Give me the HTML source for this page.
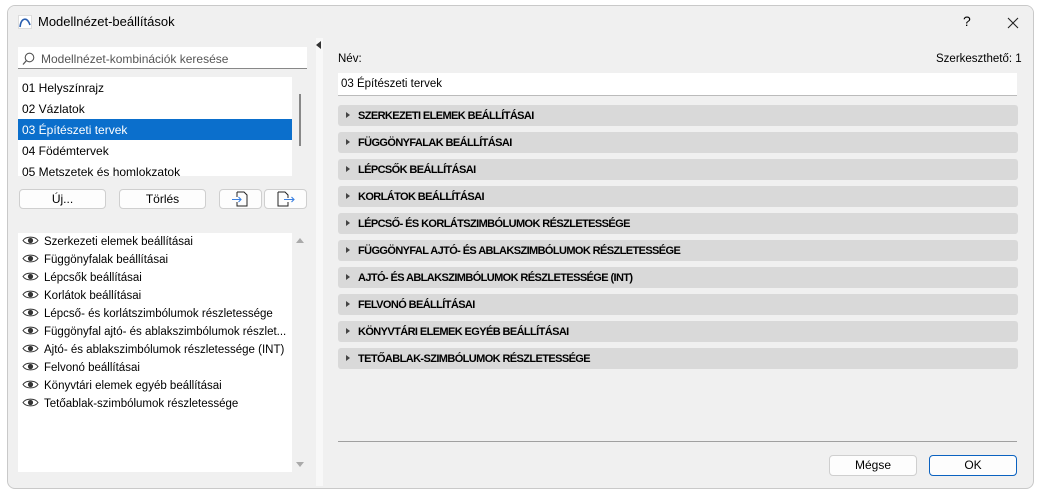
<!DOCTYPE html>
<html><head><meta charset="utf-8"><style>
*{box-sizing:border-box;margin:0;padding:0}
body{width:1041px;height:498px;background:#fff;font-family:"Segoe UI","Liberation Sans",sans-serif;font-size:12px;color:#000;position:relative;overflow:hidden}
.abs{position:absolute}
#win{left:7px;top:5px;width:1027px;height:484px;background:#f0f0f0;border:1px solid #c9c9c9;border-radius:8px;overflow:hidden}
#title{left:0;top:0;width:1027px;height:33px;background:#f0f0f0}
.t{position:absolute;white-space:nowrap}
.box{position:absolute;background:#fff}
.row{position:absolute;left:0;width:274px;height:21px;line-height:23px;padding-left:4px;font-size:12px}
.sel{background:#0b6fcc;color:#fff}
.btn{position:absolute;background:#fdfdfd;border:1px solid #cfcfcf;border-radius:4px;text-align:center;line-height:19px;font-size:12px}
.lr{position:absolute;left:4px;height:18px;line-height:19px;font-size:11.5px;white-space:nowrap}
.lr svg{vertical-align:middle;margin-right:5px;margin-top:-2px}
.sec{position:absolute;left:338px;width:680px;height:21px;background:#d9d9d9;border-radius:3px;font-weight:bold;font-size:11px;letter-spacing:-0.6px;line-height:22px;padding-left:20px}
.sec:before{content:"";position:absolute;left:8px;top:7px;border-left:4px solid #444;border-top:3.5px solid transparent;border-bottom:3.5px solid transparent}
</style></head><body>
<div id="win" class="abs">
 <div id="title" class="abs">
  <svg class="abs" style="left:10px;top:9px" width="14" height="14" viewBox="0 0 14 14"><rect x="0.5" y="0.5" width="13" height="13" fill="#fff" stroke="#ddd"/><path d="M2 12 C3 3,9 1,12 10" fill="none" stroke="#2a5fb0" stroke-width="1.6"/></svg>
  <div class="t" style="left:30px;top:8px;font-size:13px">Modellnézet-beállítások</div>
  <div class="t" style="left:955px;top:7px;font-size:14px">?</div>
  <svg class="abs" style="left:999px;top:11px" width="12" height="12"><path d="M1 1L11 11M11 1L1 11" stroke="#222" stroke-width="1.1"/></svg>
 </div>
</div>
<div class="abs" style="left:316px;top:38px;width:7px;height:448px;background:#f8f8f8"></div>
<div class="abs" style="left:316px;top:41px;border-right:5px solid #333;border-top:4px solid transparent;border-bottom:4px solid transparent"></div>

<div class="box" style="left:18px;top:47px;width:289px;height:22px;border-bottom:1px solid #888"></div>
<svg class="abs" style="left:22px;top:52px" width="14" height="14"><circle cx="7.5" cy="5.5" r="4.3" fill="none" stroke="#555" stroke-width="1.1"/><path d="M4.5 8.5L1 12.5" stroke="#555" stroke-width="1.3"/></svg>
<div class="t" style="left:41px;top:52px;color:#555;font-size:12px">Modellnézet-kombinációk keresése</div>

<div class="box" style="left:18px;top:77px;width:274px;height:99px;overflow:hidden">
 <div class="row" style="top:0">01 Helyszínrajz</div>
 <div class="row" style="top:21px">02 Vázlatok</div>
 <div class="row sel" style="top:42px">03 Építészeti tervek</div>
 <div class="row" style="top:63px">04 Födémtervek</div>
 <div class="row" style="top:84px">05 Metszetek és homlokzatok</div>
</div>
<div class="abs" style="left:299px;top:94px;width:2px;height:52px;background:#888"></div>

<div class="btn" style="left:19px;top:189px;width:87px;height:20px">Új...</div>
<div class="btn" style="left:119px;top:189px;width:87px;height:20px">Törlés</div>
<div class="btn" style="left:219px;top:189px;width:43px;height:20px"><svg width="24" height="16" style="margin-top:1px"><path d="M8 1h7l3 3v11H8v-4M8 6V1" fill="none" stroke="#222"/><path d="M3 8.5h9M9.5 6l2.5 2.5L9.5 11" fill="none" stroke="#3a7fe0" stroke-width="1.1"/></svg></div>
<div class="btn" style="left:264px;top:189px;width:43px;height:20px"><svg width="24" height="16" style="margin-top:1px"><path d="M4 1h7l3 3v3M14 11v4H4V1" fill="none" stroke="#222"/><path d="M10 8.5h10M17.5 6l2.5 2.5L17.5 11" fill="none" stroke="#3a7fe0" stroke-width="1.1"/></svg></div>

<div class="box" style="left:18px;top:233px;width:274px;height:239px">
 <div class="lr" style="top:0"><svg width="17" height="11"><path d="M1 5.5C4 1,13 1,16 5.5C13 10,4 10,1 5.5Z" fill="none" stroke="#333"/><circle cx="8.5" cy="5.5" r="2.6" fill="#333"/></svg>Szerkezeti elemek beállításai</div>
 <div class="lr" style="top:18px"><svg width="17" height="11"><path d="M1 5.5C4 1,13 1,16 5.5C13 10,4 10,1 5.5Z" fill="none" stroke="#333"/><circle cx="8.5" cy="5.5" r="2.6" fill="#333"/></svg>Függönyfalak beállításai</div>
 <div class="lr" style="top:36px"><svg width="17" height="11"><path d="M1 5.5C4 1,13 1,16 5.5C13 10,4 10,1 5.5Z" fill="none" stroke="#333"/><circle cx="8.5" cy="5.5" r="2.6" fill="#333"/></svg>Lépcsők beállításai</div>
 <div class="lr" style="top:54px"><svg width="17" height="11"><path d="M1 5.5C4 1,13 1,16 5.5C13 10,4 10,1 5.5Z" fill="none" stroke="#333"/><circle cx="8.5" cy="5.5" r="2.6" fill="#333"/></svg>Korlátok beállításai</div>
 <div class="lr" style="top:72px"><svg width="17" height="11"><path d="M1 5.5C4 1,13 1,16 5.5C13 10,4 10,1 5.5Z" fill="none" stroke="#333"/><circle cx="8.5" cy="5.5" r="2.6" fill="#333"/></svg>Lépcső- és korlátszimbólumok részletessége</div>
 <div class="lr" style="top:90px"><svg width="17" height="11"><path d="M1 5.5C4 1,13 1,16 5.5C13 10,4 10,1 5.5Z" fill="none" stroke="#333"/><circle cx="8.5" cy="5.5" r="2.6" fill="#333"/></svg>Függönyfal ajtó- és ablakszimbólumok részlet...</div>
 <div class="lr" style="top:108px"><svg width="17" height="11"><path d="M1 5.5C4 1,13 1,16 5.5C13 10,4 10,1 5.5Z" fill="none" stroke="#333"/><circle cx="8.5" cy="5.5" r="2.6" fill="#333"/></svg>Ajtó- és ablakszimbólumok részletessége (INT)</div>
 <div class="lr" style="top:126px"><svg width="17" height="11"><path d="M1 5.5C4 1,13 1,16 5.5C13 10,4 10,1 5.5Z" fill="none" stroke="#333"/><circle cx="8.5" cy="5.5" r="2.6" fill="#333"/></svg>Felvonó beállításai</div>
 <div class="lr" style="top:144px"><svg width="17" height="11"><path d="M1 5.5C4 1,13 1,16 5.5C13 10,4 10,1 5.5Z" fill="none" stroke="#333"/><circle cx="8.5" cy="5.5" r="2.6" fill="#333"/></svg>Könyvtári elemek egyéb beállításai</div>
 <div class="lr" style="top:162px"><svg width="17" height="11"><path d="M1 5.5C4 1,13 1,16 5.5C13 10,4 10,1 5.5Z" fill="none" stroke="#333"/><circle cx="8.5" cy="5.5" r="2.6" fill="#333"/></svg>Tetőablak-szimbólumok részletessége</div>
</div>
<div class="abs" style="left:296px;top:238px;border-bottom:5px solid #aaa;border-left:4px solid transparent;border-right:4px solid transparent"></div>
<div class="abs" style="left:296px;top:462px;border-top:5px solid #aaa;border-left:4px solid transparent;border-right:4px solid transparent"></div>

<div class="t" style="left:338px;top:53px;font-size:11.5px">Név:</div>
<div class="t" style="left:936px;top:53px;font-size:11.5px">Szerkeszthető: 1</div>
<div class="box" style="left:338px;top:73px;width:679px;height:23px;border-bottom:1px solid #bbb"></div>
<div class="t" style="left:341px;top:78px;font-size:11.5px">03 Építészeti tervek</div>

<div class="sec" style="top:105px">SZERKEZETI ELEMEK BEÁLLÍTÁSAI</div>
<div class="sec" style="top:132px">FÜGGÖNYFALAK BEÁLLÍTÁSAI</div>
<div class="sec" style="top:159px">LÉPCSŐK BEÁLLÍTÁSAI</div>
<div class="sec" style="top:186px">KORLÁTOK BEÁLLÍTÁSAI</div>
<div class="sec" style="top:213px">LÉPCSŐ- ÉS KORLÁTSZIMBÓLUMOK RÉSZLETESSÉGE</div>
<div class="sec" style="top:240px">FÜGGÖNYFAL AJTÓ- ÉS ABLAKSZIMBÓLUMOK RÉSZLETESSÉGE</div>
<div class="sec" style="top:267px">AJTÓ- ÉS ABLAKSZIMBÓLUMOK RÉSZLETESSÉGE (INT)</div>
<div class="sec" style="top:294px">FELVONÓ BEÁLLÍTÁSAI</div>
<div class="sec" style="top:321px">KÖNYVTÁRI ELEMEK EGYÉB BEÁLLÍTÁSAI</div>
<div class="sec" style="top:348px">TETŐABLAK-SZIMBÓLUMOK RÉSZLETESSÉGE</div>

<div class="abs" style="left:338px;top:441px;width:679px;height:1px;background:#a0a0a0"></div>
<div class="btn" style="left:829px;top:455px;width:88px;height:21px">Mégse</div>
<div class="btn" style="left:929px;top:455px;width:88px;height:21px;border:1px solid #0b62c0">OK</div>
</body></html>
